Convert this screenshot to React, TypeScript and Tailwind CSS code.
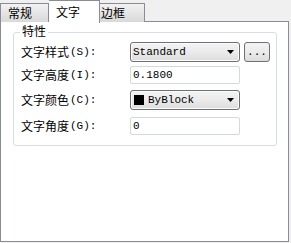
import React from "react";

const cjk = { fontFamily: '"Noto Sans CJK SC", "Liberation Sans", sans-serif' };
const mono = { fontFamily: '"Liberation Mono", "Noto Sans CJK SC", monospace' };

function Arrow() {
  return (
    <svg width="7" height="4" viewBox="0 0 7 4" className="shrink-0">
      <polygon points="0,0 7,0 3.5,4" fill="#000" />
    </svg>
  );
}

function Combo({ children }: { children: React.ReactNode }) {
  return (
    <div className="w-[110px] h-[20px] border border-[#707070] rounded-[3px] bg-gradient-to-b from-[#f3f3f3] via-[#ebebeb] to-[#dcdcdc] flex items-center pl-[2px] pr-[5px] shadow-[inset_0_0_0_1px_#fcfcfc]">
      <div className="flex-1 flex items-center text-[11px] text-black leading-none" style={mono}>
        {children}
      </div>
      <Arrow />
    </div>
  );
}

function Input({ value }: { value: string }) {
  return (
    <div className="w-[110px] h-[18px] border border-[#d3d9df] rounded-[2px] bg-white flex items-center pl-[2px] text-[11px] leading-none text-black" style={mono}>
      {value}
    </div>
  );
}

function Label({ text, key2 }: { text: string; key2: string }) {
  return (
    <div className="w-[109px] flex items-center leading-none text-black">
      <span className="text-[12px]" style={cjk}>{text}</span>
      <span className="text-[11px] ml-[1px] font-light" style={mono}>{key2}</span>
    </div>
  );
}

export default function App() {
  return (
    <div className="w-[291px] h-[243px] bg-[#f0f0f0] flex flex-col" style={cjk}>
      <div className="flex items-end h-[22px] relative z-10">
        <div className="w-[49px] h-[19px] border border-[#898c95] border-b-0 bg-gradient-to-b from-[#f2f2f2] to-[#d9d9d9] flex items-center pl-[7px] text-[12px] leading-none text-black">
          常规
        </div>
        <div className="w-[51px] border border-[#898c95] border-b-0 border-l-0 bg-white flex items-center pl-[7px] text-[12px] leading-none text-black -mb-px h-[23px]">
          文字
        </div>
        <div className="w-[45px] h-[19px] border border-[#898c95] border-b-0 border-l-0 bg-gradient-to-b from-[#f2f2f2] to-[#d9d9d9] flex items-center pl-[1px] text-[12px] leading-none text-black">
          边框
        </div>
      </div>
      <div className="w-[289px] h-[221px] -mt-px border border-[#898c95] bg-white">
        <div className="relative ml-[12px] mt-[10px] w-[264px] h-[114px] border border-[#d5dfe5] rounded-[3px]">
          <div className="absolute left-[6px] top-[-8px] bg-white px-[2px] text-[12px] leading-none text-black">
            特性
          </div>
          <div className="flex flex-col pl-[7px]">
            <div className="flex items-center h-[20px] mt-[9px]">
              <Label text="文字样式" key2="(S):" />
              <Combo>Standard</Combo>
              <div className="ml-[4px] w-[26px] h-[20px] border border-[#707070] rounded-[3px] bg-gradient-to-b from-[#f3f3f3] via-[#ebebeb] to-[#dcdcdc] flex items-center justify-center text-[11px] leading-none text-black" style={mono}>
                ...
              </div>
            </div>
            <div className="flex items-center h-[18px] mt-[4px]">
              <Label text="文字高度" key2="(I):" />
              <Input value="0.1800" />
            </div>
            <div className="flex items-center h-[20px] mt-[6px]">
              <Label text="文字颜色" key2="(C):" />
              <Combo>
                <span className="w-[10px] h-[10px] bg-black mr-[4px] ml-[1px] inline-block" />
                ByBlock
              </Combo>
            </div>
            <div className="flex items-center h-[18px] mt-[7px]">
              <Label text="文字角度" key2="(G):" />
              <Input value="0" />
            </div>
          </div>
        </div>
      </div>
    </div>
  );
}
